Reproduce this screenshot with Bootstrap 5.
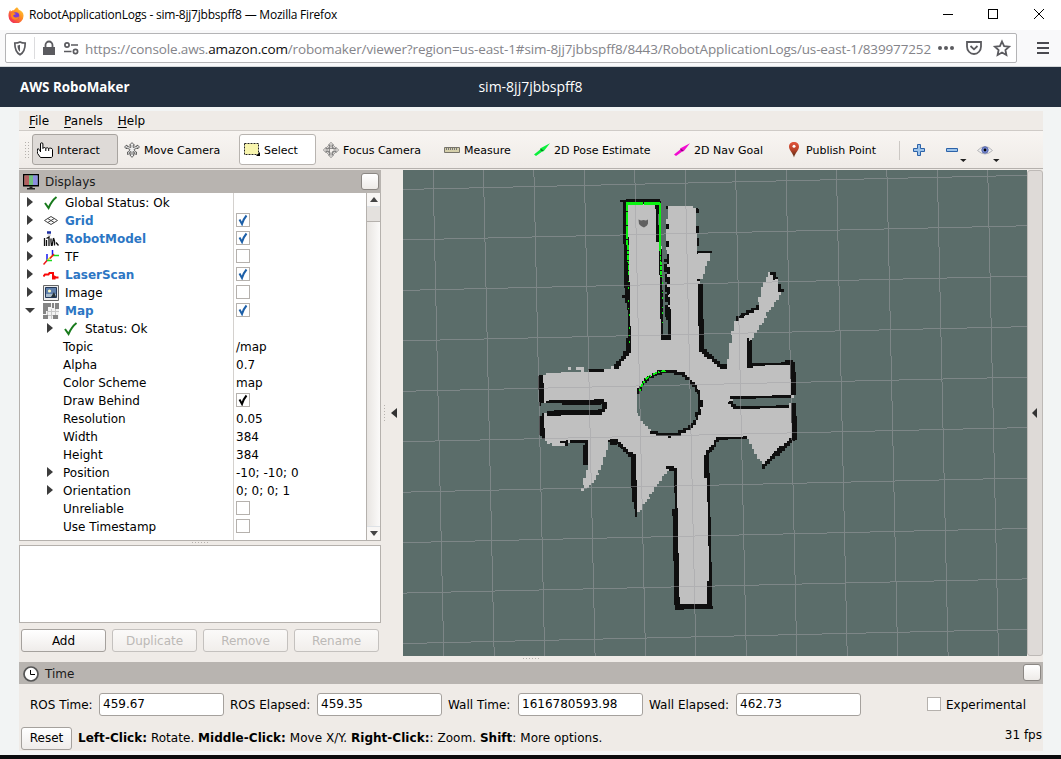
<!DOCTYPE html>
<html lang="en">
<head>
<meta charset="utf-8">
<title>RobotApplicationLogs - sim-8jj7jbbspff8</title>
<link href="https://cdn.jsdelivr.net/npm/bootstrap@5.3.0/dist/css/bootstrap.min.css" rel="stylesheet">
<style>
body{width:1061px;height:759px;overflow:hidden;background:#f2f4f4;font:12px/18px "DejaVu Sans",sans-serif;color:#000}
svg{display:block;flex:none}
.ui{font-family:"Open Sans","Noto Sans",sans-serif}
.titlebar{height:30px;background:#fff;padding-left:8px}
.titlebar .cap{font-size:12px;letter-spacing:-.215px;margin-left:5px;white-space:nowrap}
.urlrow{height:37px;background:#f9f9fa;border-bottom:1px solid #d5d8da;padding:3px 0 0 5px}
.urlbox{width:1012px;height:30px;background:#fff;border:1px solid #b4b4b6;border-radius:2px}
.urltext{width:846px;font-size:13.5px;letter-spacing:-.135px;color:#84848a;overflow:hidden;white-space:nowrap;line-height:30px;height:28px}
.urltext b{font-weight:400;color:#0c0c0d}
.awsbar{height:40px;background:#232f3e;color:#fff}
.brand{font-size:13.35px;padding-left:20px}
.simname{font-size:14px}
.app{width:1024px;height:640px;margin:4px 0 0 19px;background:#efebe7}
.menus{height:20px;border-bottom:1px solid #cfcbc7;padding-left:10px;gap:15px}
.menus u{text-underline-offset:2px}
.tools{height:38px;background:linear-gradient(#f8f5f2,#efebe7);border-bottom:1px solid #b5b1ad;font-size:11px;padding-left:5px}
.tool{height:31px;padding-left:5px;padding-top:3px;gap:4px;border:1px solid transparent;border-radius:3px;white-space:nowrap}
.tool svg{margin-top:-3px}
.tool.on{background:#dedad7;border-color:#a8a4a0}
.tool.hov{background:#fff;border-color:#b8b4b0}
.grip{background-image:radial-gradient(circle,#b5b1ad 35%,transparent 40%);background-size:3px 3px}
.panelhead{background:#b8b4b0;color:#1a1a1a;padding-left:4px}
.floatbtn{width:18px;height:17px;border:1px solid #8b8783;border-radius:3px;background:linear-gradient(#fff,#eeebe8)}
.tree{height:348px;border:1px solid #b5b1ad;border-top:0;background:#fff}
.names{width:214px;border-right:1px solid #d4d1ce;padding-top:1px}
.vals{width:132px;padding-left:2px;padding-top:1px}
.trow{height:18px;white-space:nowrap}
.trow.top{padding-left:7px}
.trow.sub{padding-left:27px}
.tri{width:0;height:0;border:5px solid transparent;border-left:6px solid #3c3c3c;border-right:0;margin:-2px 10px 0 0}
.tri.open{border:5px solid transparent;border-top:5px solid #3c3c3c;border-bottom:0;margin:-2px 8px 0 -2px}
.trow svg{margin-right:6px;margin-top:-1px}
.sub .tri+svg{margin-right:6px}
.tri.bare{margin-right:10px}
.trow b{color:#2c76c4}
.leaf{padding-left:43px}
.chk{width:14px;height:14px;border:1px solid #b5b1ad;background:#fff}
.vals .chk{margin-top:1px}
.chk svg{margin:0!important}
.sbar{width:14px;border-left:1px solid #b5b1ad;background:linear-gradient(90deg,#e8e5e2,#fbfaf9)}
.sbtn{height:14px;background:#f8f6f4}
.sthumb{height:15px;background:#e4e1de;border-bottom:1px solid #b5b1ad}
.note{height:78px;border:1px solid #b5b1ad;background:#fff}
.qbtn{width:85px;height:23px;border:1px solid #a5a19d;border-radius:3px;background:linear-gradient(#fff,#efecea);color:#000;font-size:12px;line-height:20px;padding:0}
.qbtn:disabled{color:#bcb9b6;border-color:#c4c1be;background:linear-gradient(#fbfaf9,#f1eeeb);opacity:1}
.qin{width:125px;height:23px;border:1px solid #a5a19d;border-radius:3px;background:#fff;padding:1px 3px;line-height:18px}
.timerow{height:40px;padding-left:11px}
.timerow span{margin-top:1px}
.helpline{letter-spacing:.035px}
.handle{width:16px;border:1px solid #bdb9b6;border-radius:3px;background:#dedad7}
</style>
</head>
<body>
<div class="titlebar ui d-flex align-items-center">
  <svg width="16" height="16" viewBox="0 0 16 16"><defs><linearGradient id="ff" x1="1" y1="0" x2=".2" y2="1"><stop offset="0" stop-color="#ffe040"/><stop offset=".45" stop-color="#ff9020"/><stop offset="1" stop-color="#f0245c"/></linearGradient></defs><path d="M9 .2c1 .7 1.600 1.600 1.800 2.600C14 4 15.800 6.200 15.500 9A7.500 7.500 0 0 1 .5 9C.4 6.500 1 4.500 2.300 3l.5 1.500C4 3.500 5 3.200 6 3.300 6.800 1.800 8 1 9 .2z" fill="url(#ff)"/><circle cx="7.800" cy="8.800" r="3.500" fill="#7a3bd8"/><path d="M3 6.500c2-1 4-.5 5 .8-2 0-2 1-3 1.500 1 2 4 2.500 6 .7 0 2-2 3.500-4 3.300C4 12.500 2.500 9.500 3 6.500z" fill="#ff8a1c"/></svg>
  <span class="cap flex-grow-1">RobotApplicationLogs - sim-8jj7jbbspff8 — Mozilla Firefox</span>
  <svg width="118" height="30" viewBox="943 0 118 30" fill="none" stroke="#000" shape-rendering="crispEdges"><path d="M943 14.500h10M988.500 9.500h9v9h-9z"/><path d="M1034 9l10 10M1044 9l-10 10" shape-rendering="auto"/></svg>
</div>
<div class="urlrow ui d-flex">
  <div class="urlbox d-flex align-items-start">
    <svg width="79" height="28" viewBox="6 34 79 28"><path d="M20 41.900c-1.700.9-3.500 1.100-5.200 1.100 0 6.400 1.300 9.700 5.200 11.700 3.900-2 5.200-5.300 5.200-11.700-1.700 0-3.500-.2-5.200-1.100z" fill="none" stroke="#5b5b5f" stroke-width="1.700"/><path d="M20 44.700c-1 .4-1.700.6-2.500.7.100 3.200.8 5 2.500 6.300z" fill="#5b5b5f"/><path d="M34.500 37v22" stroke="#dcdcde"/><path d="M43 47h12v8H43z" fill="#5b5b5f"/><path d="M45.500 47.500v-2.500a3.500 3.500 0 0 1 7 0v2.500" fill="none" stroke="#5b5b5f" stroke-width="1.800"/><g fill="none" stroke="#5b5b5f" stroke-width="1.700"><circle cx="67" cy="45" r="2.100"/><circle cx="75.500" cy="51.500" r="2.100"/><path d="M71 45h7M64 51.500h7.500"/></g></svg>
    <div class="urltext">https://console.aws.<b>amazon.com</b>/robomaker/viewer?region=us-east-1#sim-8jj7jbbspff8/8443/RobotApplicationLogs/us-east-1/839977252</div>
    <svg width="82" height="28" viewBox="931 34 82 28" fill="none" stroke="#5b5b5f" stroke-width="1.800"><g fill="#5b5b5f" stroke="none"><circle cx="940" cy="48" r="2"/><circle cx="946" cy="48" r="2"/><circle cx="952" cy="48" r="2"/></g><path d="M967 42h14v4.500c0 4-3 7.500-7 7.500s-7-3.500-7-7.500zM970.500 46l3.500 3.300 3.500-3.300"/><path d="M1002 41.500l2.100 4.600 5 .5-3.700 3.400 1 5-4.400-2.500-4.400 2.500 1-5-3.700-3.400 5-.5z"/></svg>
  </div>
  <svg width="40" height="28" viewBox="1017 33 40 28"><path d="M1037 43h12M1037 48h12M1037 53h12" stroke="#4a4a4f" stroke-width="2"/></svg>
</div>
<div class="awsbar ui row g-0 align-items-center">
  <div class="col-4"><strong class="brand">AWS RoboMaker</strong></div>
  <div class="col-4 text-center"><span class="simname">sim-8jj7jbbspff8</span></div>
</div>

<div class="app d-flex flex-column">
  <div class="menus d-flex align-items-center"><span><u>F</u>ile</span><span><u>P</u>anels</span><span><u>H</u>elp</span></div>
  <div class="tools d-flex align-items-center">
    <i class="grip" style="width:6px;height:18px;margin-right:2px"></i>
    <div class="tool on d-flex align-items-center" style="width:86px;padding-left:4px"><svg width="16" height="16" viewBox="0 0 16 16" fill="#fff" stroke="#000"><path d="M3.500 10V2a1.200 1.200 0 0 1 2.400 0v4.500c.2-1.300 2.700-1.300 2.900 0 .3-1.100 2.700-1 2.900.3.300-1 3.800-1 3.800.8V14c0 .8-.6 1.500-1.400 1.500H3.500L.6 11.500C.2 9 .2 6.500 1 6.500s1 1.500 2.300 3"/><path d="M8.800 6.500V9M11.700 7v2" fill="none"/></svg>Interact</div>
    <div class="tool d-flex align-items-center" style="width:121px"><svg width="16" height="16" viewBox="0 0 16 16" fill="#eee" stroke="#444" stroke-width=".8"><path d="M8 .6L5.500 3.200h1.300v2.300L3 4.200V3L.5 4.800 2.500 7V5.800L6 7.500 4.500 10H3.500v2.500l2.500-1L5.500 10.500 7 9.500v3.300H5.800L8 15.400l2.200-2.600H9V9.500l1.500 1-.5 1 2.500 1V10h-1L10 7.500l3.500-1.700V7l2-2.200L13 3v1.200L9.200 5.500V3.200h1.300z"/></svg>Move Camera</div>
    <div class="tool hov d-flex align-items-center" style="width:77px;padding-left:4px"><svg width="16" height="16" viewBox="0 0 16 16"><path d="M.5 1.500h14v11H.5z" fill="#f8f5ae" stroke="#222" stroke-dasharray="2 1"/><path d="M16 10v4h-4z"/></svg>Select</div>
    <div class="tool d-flex align-items-center" style="width:122px;padding-left:6px"><svg width="16" height="16" viewBox="0 0 16 16" fill="none" stroke="#777" stroke-width=".8"><circle cx="8" cy="8" r="5"/><circle cx="8" cy="8" r="3.300"/><path d="M6.500 10V3H5.500L8 .3 10.500 3h-1v3.500H13v-1L15.700 8 13 10.500v-1H9.500V13h1L8 15.700 5.500 13h1V9.500H3v1L.3 8 3 5.500v1h7"/></svg>Focus Camera</div>
    <div class="tool d-flex align-items-center" style="width:89px"><svg width="16" height="16" viewBox="0 0 16 16"><path d="M.5 5.500h15v5H.5z" fill="#d5cfaa" stroke="#77746a"/><path d="M2.500 6v2M4.500 6v2M6.500 6v2M8.500 6v2M10.500 6v2M12.500 6v2" stroke="#777"/></svg>Measure</div>
    <div class="tool d-flex align-items-center" style="width:140px;padding-left:6px"><svg width="16" height="16" viewBox="0 0 16 16" fill="#0cf03c"><path d="M0 12.500L6.500 7.300 6 6.500 16 1.300 9.500 9.500 9 9 2 14z"/><path d="M6.500 7.300l2.500 1.500" stroke="#087a20" stroke-width="1.500"/></svg>2D Pose Estimate</div>
    <div class="tool d-flex align-items-center" style="width:115px;padding-left:6px"><svg width="16" height="16" viewBox="0 0 16 16" fill="#f20cd0"><path d="M0 12.500L6.500 7.300 6 6.500 16 1.300 9.500 9.500 9 9 2 14z"/><path d="M6.500 7.300l2.500 1.500" stroke="#8a0878" stroke-width="1.500"/></svg>2D Nav Goal</div>
    <div class="tool d-flex align-items-center" style="width:115px;padding-left:3px"><svg width="16" height="16" viewBox="0 0 16 16"><defs><linearGradient id="pin" x2="0" y2="1"><stop stop-color="#e2553c"/><stop offset=".5" stop-color="#b9432a"/><stop offset="1" stop-color="#4b2a10"/></linearGradient></defs><path d="M8 0c3 0 5 2 5 4.800C13 8.500 9 11 8 15.500 7 11 3 8.500 3 4.800 3 2 5 0 8 0z" fill="url(#pin)"/><circle cx="8" cy="4.300" r="1.500" fill="#fff"/></svg>Publish Point</div>
    <svg width="110" height="31" viewBox="897 134 110 31" fill="#9cc3ea" stroke="#2c62a8"><path d="M899.500 141v19" stroke="#ccc8c4"/><path d="M917.500 144.500h3v4h4v3h-4v4h-3v-4h-4v-3h4zM946.500 148.500h11v3h-11z"/><path d="M960 159h6.500l-3.200 3zM993 159h6.500l-3.200 3z" fill="#222" stroke="none"/><path d="M977.500 150.500q7.500-8 15 0-7.500 7-15 0z" fill="#efefef" stroke="#b5b5b8"/><circle cx="985" cy="150" r="3.200" fill="#7b8fd8" stroke="#5867ac"/><circle cx="985" cy="150" r="1.400" fill="#000" stroke="none"/></svg>
  </div>

  <div class="d-flex" style="height:487px;padding-top:1px">
    <div style="width:362px">
      <div class="panelhead d-flex align-items-center" style="height:23px">
        <svg width="16" height="16" viewBox="0 0 16 16"><path d="M.7.700h14.600v11H.700z" fill="#85b9a0" stroke="#000" stroke-width="1.400"/><path d="M1.400 1.400H6V11H1.400z" fill="#b35f60"/><path d="M6 1.400h4V11H6z" fill="#70c080"/><path d="M10 1.400h4.600V11H10z" fill="#8c8ce0"/><path d="M6.500 12.500h3v1.500h2.500v1.500H4V14h2.500z" fill="#222"/></svg>
        <span class="flex-grow-1" style="margin-left:6px">Displays</span><i class="floatbtn" style="margin:-1px 2px 0 0"></i>
      </div>
      <div class="tree d-flex">
        <div class="names">
          <div class="trow top d-flex align-items-center"><i class="tri"></i><svg width="16" height="16"><path d="M2 8l3.500 5Q8.500 6 13.500 2" fill="none" stroke="#187a1c" stroke-width="2"/></svg>Global Status: Ok</div>
          <div class="trow top d-flex align-items-center"><i class="tri"></i><svg width="16" height="16" fill="none" stroke="#444"><path d="M1.500 7.500L8 3.500l6.500 4L8 11.500zM4.700 5.500l6.500 4M11.300 5.500l-6.500 4"/></svg><b>Grid</b></div>
          <div class="trow top d-flex align-items-center"><i class="tri"></i><svg width="16" height="16" fill="none" stroke="#111"><path d="M4 1.500h4" stroke="#1c2ea0" stroke-width="2.500"/><path d="M4.500 4h3.500" stroke="#bbb"/><path d="M1.500 7v8M3.500 9v6M3.500 7.500L6 6v9M8 7.500v3l.5 4.500M10.500 7l-1.500 8M10.500 7l1 3v4.500M13 11.500l2.500 3" stroke-width="1.300"/></svg><b>RobotModel</b></div>
          <div class="trow top d-flex align-items-center"><i class="tri"></i><svg width="16" height="16" fill="none" stroke-width="1.500"><path d="M9.500 6.500H16" stroke="#1ed81e"/><path d="M9.500 6.500V1M4 12V5" stroke="#1a1af0"/><path d="M9.500 6.500l-5.500 5" stroke="#f0e020"/><path d="M11 5L7 9.500M4 11.500l-3.500 4" stroke="#f01818"/><path d="M4 11.500h5" stroke="#1ed81e"/></svg>TF</div>
          <div class="trow top d-flex align-items-center"><i class="tri"></i><svg width="16" height="16" fill="none" stroke="#f80808" stroke-width="2"><path d="M.5 9.500L2 7.500h3.500l1-1.500H10v5.500h1.500V9.500l1.500 1h2.500"/></svg><b>LaserScan</b></div>
          <div class="trow top d-flex align-items-center"><i class="tri"></i><svg width="16" height="16"><path d="M.5.5h15v15H.5z" fill="#eee" stroke="#666"/><path d="M2.500 2.500h11v10h-11z" fill="#6080ac" stroke="#243858"/><path d="M3 9h10v3H3z" fill="#a8bccc"/><circle cx="6.500" cy="6" r="1.600" fill="#fbf7c0"/><path d="M8 12l3-5 2 5z" fill="#263238"/></svg>Image</div>
          <div class="trow top d-flex align-items-center"><i class="tri open"></i><svg width="16" height="16" shape-rendering="crispEdges"><path d="M0 0h16v16H0z" fill="#f4f4f4"/><path d="M4.500 6v10M8.500 6v10M12.500 0v12M4 8.500h12M0 12.500h10" stroke="#c8c8c8"/><path d="M0 0h8v4H5v4H3v3H0zM9 0h2v5H9zM12 0h4v6h-4zM0 12h5v4H0zM10 12h5v4h-5z" fill="#858585"/></svg><b>Map</b></div>
          <div class="trow sub d-flex align-items-center"><i class="tri"></i><svg width="16" height="16"><path d="M2 8l3.500 5Q8.500 6 13.500 2" fill="none" stroke="#187a1c" stroke-width="2"/></svg>Status: Ok</div>
          <div class="trow leaf">Topic</div><div class="trow leaf">Alpha</div><div class="trow leaf">Color Scheme</div><div class="trow leaf">Draw Behind</div><div class="trow leaf">Resolution</div><div class="trow leaf">Width</div><div class="trow leaf">Height</div>
          <div class="trow sub d-flex align-items-center"><i class="tri bare"></i>Position</div>
          <div class="trow sub d-flex align-items-center"><i class="tri bare"></i>Orientation</div>
          <div class="trow leaf">Unreliable</div><div class="trow leaf">Use Timestamp</div>
        </div>
        <div class="vals" id="vals"></div>
        <div class="sbar d-flex flex-column"><div class="sbtn d-flex align-items-center justify-content-center border-bottom"><svg width="8" height="5"><path d="M0 5l4-5 4 5z" fill="#444"/></svg></div><div class="sthumb"></div><div class="flex-grow-1"></div><div class="sbtn d-flex align-items-center justify-content-center border-top"><svg width="8" height="5"><path d="M0 0l4 5 4-5z" fill="#444"/></svg></div></div>
      </div>
      <div class="d-flex justify-content-center" style="height:4px"><i class="grip" style="width:18px;height:3px"></i></div>
      <div class="note"></div>
      <div class="d-flex" style="padding:6px 2px;gap:6px"><button class="qbtn">Add</button><button class="qbtn" disabled>Duplicate</button><button class="qbtn" disabled>Remove</button><button class="qbtn" disabled>Rename</button></div>
    </div>
    <div class="d-flex align-items-center" style="width:22px;padding-left:2px"><i class="grip" style="width:3px;height:18px"></i><svg width="6" height="10" style="margin-left:5px;margin-top:-1px"><path d="M6 0v10L0 5z" fill="#333"/></svg></div>
    <svg id="scene" width="624" height="486" viewBox="403 170 624 486" style="background:#5b6d6a" shape-rendering="crispEdges">
      <g id="cells" transform="translate(689.8 384.8) rotate(-1.290)"><path id="free" fill="#c0c0c0"/><path id="wall" fill="#0f0f0f"/></g>
      <g id="gridlines" stroke="#a0a0a4" stroke-opacity=".5" fill="none"></g>
      <g fill="none" stroke="#0cf312">
        <path d="M626 203.500h34" stroke-width="2.500" stroke-dasharray="9 0 8 1"/><path d="M626.500 203l.5 42" stroke-width="2" stroke-dasharray="8 1 5 0"/><path d="M628 245l.5 28" stroke-width="1.600" stroke-dasharray="5 1 3 1"/><path d="M628.500 273l1 73" stroke-dasharray="2 6 1 5 2 11"/>
        <path d="M660 203l.5 48" stroke-width="2"/><path d="M660.500 251l.5 26" stroke-width="1.600" stroke-dasharray="4 1"/><path d="M662 277l1 48" stroke-dasharray="1 4 2 8"/>
        <path d="M640 391Q643 374 667 370.500" stroke-width="2" stroke-dasharray="2 2 4 1"/>
      </g>
      <path d="M638.500 219.500l2.500 1 2.500-.5 2.500.5 2-1v4l-1 2-3 2-3-1.500-2-2z" fill="#606060" shape-rendering="auto"/>
    </svg>
    <div class="handle d-flex align-items-center justify-content-center"><svg width="5" height="10" style="margin:-1px 2px 0 0"><path d="M5 0v10L0 5z" fill="#333"/></svg></div>
  </div>
  <div class="d-flex justify-content-center" style="height:6px;padding-top:1px"><i class="grip" style="width:18px;height:3px"></i></div>
  <div class="panelhead d-flex align-items-center" style="height:22px">
    <svg width="16" height="16" style="margin-top:1px"><circle cx="8" cy="8" r="7" fill="#fff" stroke="#555" stroke-width="1.700"/><path d="M7.500 4v4.500H12" fill="none" stroke="#000"/></svg>
    <span class="flex-grow-1" style="margin:2px 0 0 6px">Time</span><i class="floatbtn" style="margin:-1px 2px 0 0"></i>
  </div>
  <div class="timerow d-flex align-items-center">
    <span style="width:69px">ROS Time:</span><div class="qin">459.67</div>
    <span style="width:93px;padding-left:6px">ROS Elapsed:</span><div class="qin">459.35</div>
    <span style="width:76px;padding-left:6px">Wall Time:</span><div class="qin">1616780593.98</div>
    <span style="width:93px;padding-left:6px">Wall Elapsed:</span><div class="qin">462.73</div>
    <i class="chk ms-auto"></i><span style="margin:1px 17px 0 5px">Experimental</span>
  </div>
  <div class="d-flex align-items-center" style="padding:3px 1px 0 2px"><button class="qbtn" style="width:51px;line-height:21px">Reset</button><span class="helpline" style="margin:-2px 0 0 6px"><b>Left-Click:</b> Rotate. <b>Middle-Click:</b> Move X/Y. <b>Right-Click:</b>: Zoom. <b>Shift</b>: More options.</span><span class="ms-auto" style="margin-top:-8px">31 fps</span></div>
</div>
<div style="height:4px;margin-top:4px;background:#0b0b0d"></div>

<script src="https://cdn.jsdelivr.net/npm/bootstrap@5.3.0/dist/js/bootstrap.bundle.min.js"></script>
<script>
// property values: 'on' / 'off' / 'blk' are check boxes
const tick = c => `<i class="chk d-block">${c ? `<svg width="12" height="12"><path d="M2.500 5.500l2.500 4.500Q6.500 5 9.500 1.500" fill="none" stroke="${c}" stroke-width="2"/></svg>` : ''}</i>`;
const kinds = {on: tick('#1c5fa8'), off: tick(''), blk: tick('#000')};
document.getElementById('vals').innerHTML = ['', 'on','on','off','on','off','on','','/map','0.7','map','blk','0.05','384','384','-10; -10; 0','0; 0; 0; 1','off','off']
  .map(v => `<div class="trow d-flex">${kinds[v] || v}</div>`).join('');

// metre grid
let g = '';
for (let i = 0; i < 12; i++) g += `M${433 + i * 50.43} 170L${443.8 + i * 50.43} 656`;
for (let i = 0; i < 10; i++) g += `M403 ${189.5 + i * 50.45}L1027 ${175.3 + i * 50.45}`;
document.getElementById('gridlines').innerHTML = `<path d="${g}"/>`;

// occupancy map, rasterised into 5 cm cells
const C = 2.522, A = 1.29 * Math.PI / 180;
const P = s => s.trim().split(/\s+/).map(p => p.split(',').map(Number));
const free = [
 P('625,202 659,202 663,337 669,337 666,206 690,206 696,208 698,252 711,252 709,260 699,283 703,350 727,368 730,345 735,320 745,315 757,306 763,285 769,273 775,273 780,288 781,294 768,313 750,342 749,364 793,364 794,436 764,466 756,455 747,437 720,438 706,455 708,500 711,606 677,606 674,470 667,471 651,494 637,514 634,458 615,441 608,443 605,456 598,475 588,488 582,490 583,482 588,468 586,442 563,445 553,445 545,440 542,405 541,375 552,373 566,372 589,371 610,369 630,352'),
 P('568,370 571,367 573,370'), P('576,370 578,366 583,366 583,371')];
const hole = [P('662,200 667,200 668,336 664,336'), P('536,405 548,402 604,401 604,413 548,413 536,411'), P('732,398 800,396.500 800,403 789,403 789,406 734,408')];
const walls = [
 [4,'623,201 659,201'],[3.8,'625,201 626,255 627,290 629,310 629,350 615,368'],[2.5,'624,296 625,297'],[2.6,'658,201 658,241'],[2.6,'661,250 662,338'],
 [2.6,'668,310 669,337'],[3.5,'663,338 669,338'],[2,'667,256 667,258'],[2,'667,242 667,246'],[2,'667,226 667,228'],[2,'667,207 667,208'],
 [2,'697,208 697,212'],[2,'697,226 697,233'],[2,'697,240 697,246'],[2.2,'698,252 711,251'],[2,'699,279 699,281'],
 [4,'700,285 702,350 721,366 726,367'],[2.8,'737,318 749,312 758,307'],[2.8,'771,273 775,275 776,279'],[3,'779,285 781,291'],
 [4,'749,341 749,365 793,363'],[4,'793,363 794,394'],[3.2,'789,396.500 732,398'],[3,'730,402 734,407'],[3.6,'734,407.500 788,406'],
 [4,'794,404 795,437 763,466'],[2.5,'746,437.500 719,438'],[3.2,'719,438 707,455'],[3.8,'707,455 707,475'],[2.3,'708,475 710,555'],[4,'710,555 710.500,606'],
 [5,'676,606 710,606'],[4.400,'677.500,606 677,560'],[3.2,'676,560 675,470'],[4,'669,468 673,469'],
 [3.8,'633,458 634,500'],[2.4,'636,500 637,516'],[3.8,'634,457 616,442 610,441'],[3.8,'586,442 586,463'],[3.6,'571,441.500 586,441.500'],[2.8,'562,441 566,443'],
 [3,'542,415 542.500,436'],[3,'541,377 541,404'],[2.3,'590,370.500 603,370.500'],
 [3.4,'547,402.500 602,401.500'],[4.400,'603,402 605,407 601,412'],[3.4,'547,413 601,412.500']];
const W = walls.map(([w, s]) => [w, P(s)]);
const inside = (x, y, p) => { let r = false; for (let i = 0, j = p.length - 1; i < p.length; j = i++) { const [a, b] = p[i], [c, d] = p[j]; if ((b > y) !== (d > y) && x < (c - a) * (y - b) / (d - b) + a) r = !r; } return r; };
const dist = (x, y, p) => { let m = 99; for (let i = 1; i < p.length; i++) { const [a, b] = p[i - 1], u = p[i][0] - a, v = p[i][1] - b, t = Math.max(0, Math.min(1, ((x - a) * u + (y - b) * v) / (u * u + v * v))); m = Math.min(m, Math.hypot(x - a - t * u, y - b - t * v)); } return m; };
let F = '', B = '';
for (let j = -75; j < 90; j++) for (let i = -62; i < 45; i++) {
  const lx = (i + .5) * C, ly = (j + .5) * C, x = 689.8 + lx * Math.cos(A) + ly * Math.sin(A), y = 384.8 - lx * Math.sin(A) + ly * Math.cos(A);
  const S = C + .12, rect = `M${(i * C - .06).toFixed(2)} ${(j * C - .06).toFixed(2)}h${S}v${S}h-${S}z`;
  const r = Math.hypot(x - 668.3, y - 403.5), a = Math.atan2(y - 403.5, x - 668.3);
  const noise = x > 665 && x < 669.5 && y > 258 && y < 312 && (i * 7 + j * 5) % 4 !== 0;
  if (W.some(([w, p]) => dist(x, y, p) < w / 2 + .15) || (r > 30.2 && r < 33.500 && (a > -2.800 && a < 2.100)) || noise) B += rect;
  else if (free.some(p => inside(x, y, p)) && !hole.some(p => inside(x, y, p)) && r > 32) F += rect;
}
document.getElementById('free').setAttribute('d', F);
document.getElementById('wall').setAttribute('d', B);
</script>
</body>
</html>
